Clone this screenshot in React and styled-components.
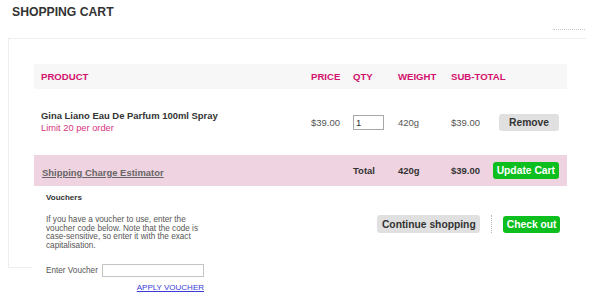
import React from "react";
import styled, { createGlobalStyle } from "styled-components";

const GlobalStyle = createGlobalStyle`
  html, body {
    margin: 0;
    padding: 0;
    background: #fff;
    font-family: "Liberation Sans", Arial, sans-serif;
    color: #333;
  }
  * { box-sizing: border-box; }
`;

const columns = "270px 42px 45px 53px 48px 75px";

const App = () => {
    const [qty, setQty] = React.useState("1");
    const [voucher, setVoucher] = React.useState("");

    return (
        <Page>
            <GlobalStyle />
            <Title>SHOPPING CART</Title>
            <DotsRow>
                <Dots />
            </DotsRow>

            <Card>
                {/* Column headings */}
                <HeadRow>
                    <HeadCell>PRODUCT</HeadCell>
                    <HeadCell>PRICE</HeadCell>
                    <HeadCell>QTY</HeadCell>
                    <HeadCell>WEIGHT</HeadCell>
                    <HeadCell>SUB-TOTAL</HeadCell>
                    <HeadCell />
                </HeadRow>

                {/* Item */}
                <ItemRow>
                    <Cell>
                        <ProductName>Gina Liano Eau De Parfum 100ml Spray</ProductName>
                        <Limit>Limit 20 per order</Limit>
                    </Cell>
                    <Cell>$39.00</Cell>
                    <Cell>
                        <QtyInput
                            type="text"
                            value={qty}
                            onChange={(ev) => setQty(ev.target.value)}
                        />
                    </Cell>
                    <Cell>420g</Cell>
                    <Cell>$39.00</Cell>
                    <ActionCell>
                        <Button width="60px">Remove</Button>
                    </ActionCell>
                </ItemRow>

                {/* Totals */}
                <TotalRow>
                    <EstimatorCell>
                        <EstimatorLink href="#">Shipping Charge Estimator</EstimatorLink>
                    </EstimatorCell>
                    <Cell bold>Total</Cell>
                    <Cell bold>420g</Cell>
                    <Cell bold>$39.00</Cell>
                    <ActionCell>
                        <Button green pad="4px">Update Cart</Button>
                    </ActionCell>
                </TotalRow>

                {/* Vouchers + checkout */}
                <Footer>
                    <VoucherBox>
                        <VoucherTitle>Vouchers</VoucherTitle>
                        <VoucherText>
                            If you have a voucher to use, enter the voucher code below. Note
                            that the code is case-sensitive, so enter it with the exact
                            capitalisation.
                        </VoucherText>
                        <VoucherRow>
                            <VoucherLabel>Enter Voucher</VoucherLabel>
                            <VoucherInput
                                type="text"
                                value={voucher}
                                onChange={(ev) => setVoucher(ev.target.value)}
                            />
                        </VoucherRow>
                        <ApplyRow>
                            <ApplyLink href="#">APPLY VOUCHER</ApplyLink>
                        </ApplyRow>
                    </VoucherBox>

                    <ButtonBar>
                        <Button tall pad="4.5px">Continue shopping</Button>
                        <Separator />
                        <Button green pad="3.5px">Check out</Button>
                    </ButtonBar>
                </Footer>
            </Card>
        </Page>
    );
};

export default App;

const Page = styled.div`
  width: 600px;
  height: 299px;
  overflow: hidden;
`;

const Title = styled.h1`
  margin: 0;
  padding: 4px 12px 0;
  font-size: 12.2px;
  line-height: 16px;
  font-weight: bold;
  color: #333;
`;

const DotsRow = styled.div`
  display: flex;
  justify-content: flex-end;
  padding-right: 15px;
  margin-top: 9px;
`;

const Dots = styled.div`
  width: 32px;
  border-top: 1px dotted #c8c8c8;
`;

const Card = styled.div`
  margin: 8px 0 0 8px;
  width: 578px;
  height: 230px;
  border: 1px solid #eeeeee;
  border-right: none;
  padding: 25px 0 0 25px;
`;

const Row = styled.div`
  display: grid;
  grid-template-columns: ${columns};
  width: 533px;
  align-items: center;
`;

const HeadRow = styled(Row)`
  height: 25px;
  background: #f7f7f7;
`;

const HeadCell = styled.div`
  padding-left: 7px;
  font-size: 9.6px;
  font-weight: bold;
  color: #d2126d;
  white-space: nowrap;
`;

const ItemRow = styled(Row)`
  height: 66px;
`;

const TotalRow = styled(Row)`
  height: 31px;
  background: #f0d3e1;
`;

const Cell = styled.div`
  padding-left: 7px;
  font-size: 9.5px;
  white-space: nowrap;
  font-weight: ${({ bold }) => (bold ? "bold" : "normal")};
  color: ${({ bold }) => (bold ? "#333" : "#555")};
`;

const EstimatorCell = styled.div`
  grid-column: span 2;
  padding-left: 8px;
`;

const EstimatorLink = styled.a`
  font-size: 9.45px;
  font-weight: bold;
  color: #666;
  text-decoration: underline;
`;

const ActionCell = styled.div`
  display: flex;
  justify-content: flex-end;
  padding-right: 8px;
`;

const ProductName = styled.div`
  font-size: 9.45px;
  line-height: 12px;
  font-weight: bold;
  color: #333;
`;

const Limit = styled.div`
  font-size: 9.3px;
  line-height: 12px;
  color: #d6337f;
`;

const QtyInput = styled.input`
  display: block;
  width: 31px;
  height: 15px;
  padding: 0 2px;
  border: 1px solid #a8a8a8;
  font-family: inherit;
  font-size: 9.5px;
  color: #333;
  outline: none;
`;

const Button = styled.button`
  display: flex;
  align-items: center;
  justify-content: center;
  width: ${({ width }) => width || "auto"};
  height: ${({ tall }) => (tall ? "18px" : "17px")};
  padding: 0 ${({ pad }) => pad || "0"};
  border: none;
  border-radius: 3px;
  background: ${({ green }) => (green ? "#0cbf1f" : "#e0e0e0")};
  color: ${({ green }) => (green ? "#fff" : "#333")};
  font-family: inherit;
  font-size: 10.3px;
  font-weight: bold;
  white-space: nowrap;
  cursor: pointer;
`;

const Footer = styled.div`
  display: flex;
  align-items: flex-start;
  width: 556px;
  margin-left: -2px;
  padding: 7px 28px 10px 14px;
  background: #fff;
`;

const VoucherBox = styled.div`
  width: 158px;
`;

const VoucherTitle = styled.div`
  font-size: 8px;
  line-height: 10px;
  font-weight: bold;
  color: #333;
`;

const VoucherText = styled.p`
  margin: 13px 0 0;
  font-size: 8.2px;
  line-height: 8.6px;
  color: #555;
`;

const VoucherRow = styled.div`
  display: flex;
  align-items: center;
  justify-content: space-between;
  margin-top: 14px;
`;

const VoucherLabel = styled.span`
  font-size: 8.2px;
  color: #555;
`;

const VoucherInput = styled.input`
  width: 102px;
  height: 13px;
  border: 1px solid #c4c4c4;
  padding: 0 2px;
  font-size: 8px;
  outline: none;
`;

const ApplyRow = styled.div`
  display: flex;
  justify-content: flex-end;
  margin-top: 6px;
  line-height: 10px;
`;

const ApplyLink = styled.a`
  font-size: 8px;
  color: #3b3bd9;
  text-decoration: underline;
`;

const ButtonBar = styled.div`
  display: flex;
  align-items: center;
  gap: 11px;
  margin-left: auto;
  margin-top: 22px;
`;

const Separator = styled.div`
  width: 0;
  height: 18px;
  border-left: 1px dotted #bbb;
`;
